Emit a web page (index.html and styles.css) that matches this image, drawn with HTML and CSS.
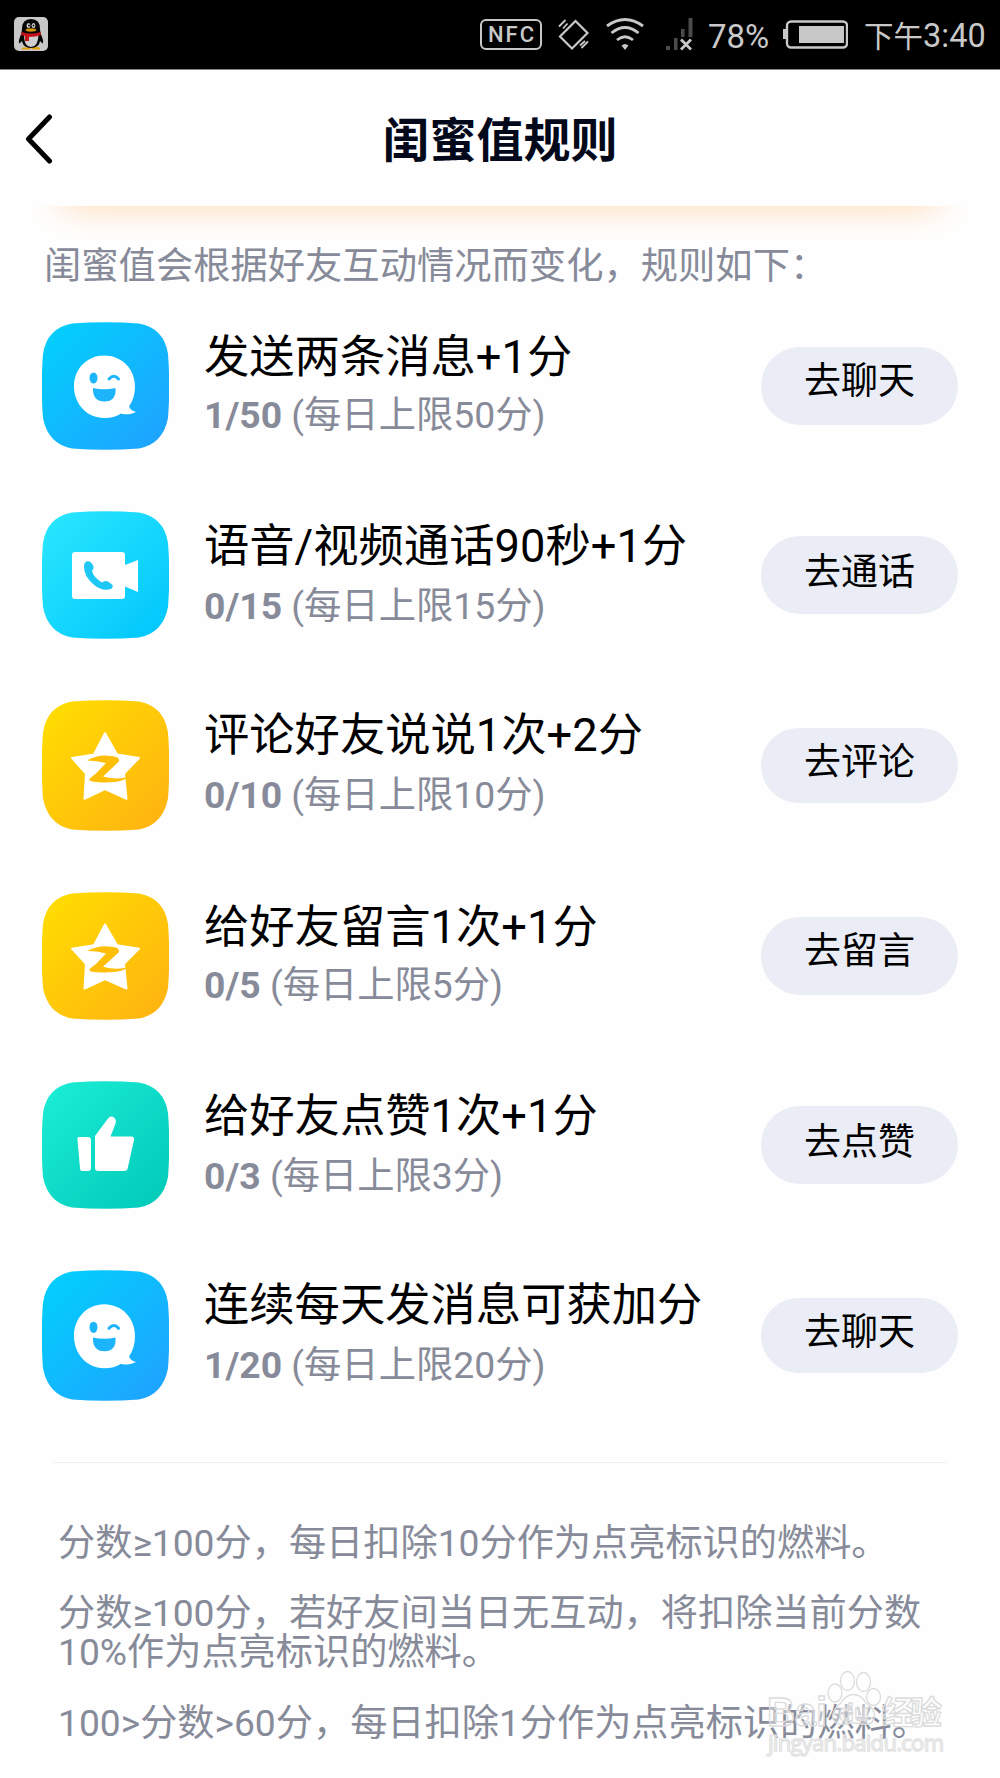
FILE: index.html
```html
<!DOCTYPE html>
<html lang="zh-CN">
<head>
<meta charset="utf-8">
<title>闺蜜值规则</title>
<link rel="stylesheet" href="styles.css">
</head>
<body>
<svg class="defs" width="0" height="0" aria-hidden="true">
  <defs>
    <linearGradient id="g-blue" x1="0" y1="0" x2="1" y2="1"><stop offset="0" stop-color="#00d2fc"/><stop offset="1" stop-color="#21a0ff"/></linearGradient>
    <linearGradient id="g-cyan" x1="0" y1="0" x2="1" y2="1"><stop offset="0" stop-color="#2be8fe"/><stop offset="1" stop-color="#00c5fc"/></linearGradient>
    <linearGradient id="g-gold" x1="0" y1="0" x2="1" y2="1"><stop offset="0" stop-color="#ffdf00"/><stop offset="1" stop-color="#ffb112"/></linearGradient>
    <linearGradient id="g-green" x1="0" y1="0" x2="1" y2="1"><stop offset="0" stop-color="#1ceed6"/><stop offset="1" stop-color="#00c8b8"/></linearGradient>
    <path id="tile-shape" d="M30 1.500Q63.500-1 97 1.500Q122 6 126 32Q128.500 64 126 96Q121 122 97 126.500Q63.500 129 30 126.500Q6 122 1 96Q-1.500 64 1 32Q5 6 30 1.500Z"/>
    <symbol id="chat" viewBox="0 0 127 128" preserveAspectRatio="none">
      <use href="#tile-shape" fill="url(#g-blue)"/>
      <path fill="#fff" d="M62 33.500C45 33.500 32 47 32 64.500S45 96 62 96C69 96 74.500 94.500 79 91.500C84 93 89 92.500 94 90Q88.500 88.500 87 84.500C91 79 93 72 93 64.500C93 47 80 33.500 62 33.500Z"/>
      <ellipse cx="51.500" cy="56" rx="4" ry="5.500" fill="#1cb5fb"/>
      <path d="M67 57Q72 51.500 76.500 57" fill="none" stroke="#1cb5fb" stroke-width="3" stroke-linecap="round"/>
      <path fill="#1cb5fb" d="M51 66Q62 68.500 73.500 66Q74.500 79.500 62.500 79.500T51 66Z"/>
    </symbol>
    <symbol id="video" viewBox="0 0 127 128" preserveAspectRatio="none">
      <use href="#tile-shape" fill="url(#g-cyan)"/>
      <path fill="#fff" d="M33 41H80Q83 41 83 44V54L96 49V81L83 75.500V85Q83 88 80 88H33Q30 88 30 85V44Q30 41 33 41Z"/>
      <path fill="#1dc8f6" d="M44 50.500Q48 49 50.500 53.500Q53 57 50 59.500Q51 66 60 71.500Q62.500 69 66 70.500L70 73.500Q72 75.500 69 78Q60 81 51 73Q42 65 42 56Q42 52 44 50.500Z"/>
    </symbol>
    <symbol id="star" viewBox="0 0 127 130" preserveAspectRatio="none">
      <use href="#tile-shape" transform="scale(1 1.0156)" fill="url(#g-gold)"/>
      <path fill="#fff" stroke="#fff" stroke-width="2" stroke-linejoin="round" d="M63 33L75 54L97 57.500L82 73L84.500 98L63 88.500L42.500 98L44 73L30 57.500L52 54Z"/>
      <path fill="#ffbf08" d="M45 60Q56 54 69 55.500Q78 56 77 61L61 76Q75 80 87 76Q80 82 67 81.500Q50 82.500 47 79.500Q48 77 54 73L64 62.500Q55 60 45 60Z"/>
    </symbol>
    <symbol id="thumb" viewBox="0 0 127 128" preserveAspectRatio="none">
      <use href="#tile-shape" fill="url(#g-green)"/>
      <path fill="#fff" d="M37 56H46Q49 56 49 59V87Q49 90 46 90H40Q38 90 38 87L35.500 59Q35 56 37 56ZM53 55L66 37.500Q69 34 72.500 37Q75 39.500 73 44L68.500 55.500H90Q92.500 56 92 59L85.500 88Q85 90 82 90H56Q53 90 53 87Z"/>
    </symbol>
  </defs>
</svg>

<header class="status">
  <svg class="qq" viewBox="0 0 34 34">
    <rect width="34" height="34" rx="5" fill="#c8c8c8"/>
    <path d="M10 30.500Q7 30 8 32.500H16L17 30.500L18.500 32.500H25.500Q27 30 23 30Z" fill="#e5a00a"/>
    <path fill="#050505" d="M17 2Q8 2 8 12Q8 16 6 20Q4 25 5.500 26.500L8 24Q9 31 17 31T26 24L28.500 26.500Q30 25 28 20Q26 16 26 12Q26 2 17 2Z"/>
    <path fill="#cecece" d="M10 18Q10 30 17 30T24.500 18Z"/>
    <ellipse cx="14.500" cy="8.500" rx="1.900" ry="2.600" fill="#d0d0d0"/><ellipse cx="19.500" cy="8.500" rx="1.900" ry="2.600" fill="#d0d0d0"/>
    <circle cx="15" cy="8.500" r=".9"/><circle cx="19.500" cy="8.500" r=".9"/>
    <ellipse cx="17" cy="13" rx="5.300" ry="1.700" fill="#d4910a"/>
    <path fill="#c31318" d="M7.500 15Q17 18 26.500 15L27 18Q22 20 15 20V24H11V19L7 18Z"/>
  </svg>
  <div class="indicators">
    <span class="nfc">NFC</span>
    <svg class="vibrate" viewBox="0 0 32 32" fill="none" stroke="#c8c8c8"><path stroke-width="2.200" d="M17.500 2L29.500 14L14 29.500L2 17.500Z"/><path stroke-width="1.800" d="M1 7.500L7.500 1M5 9.500L9.500 4.500M23.500 29L30 22.500M22 26.500L27 22"/></svg>
    <svg class="wifi" viewBox="0 0 38 32" fill="none" stroke="#c8c8c8" stroke-width="2.800"><path d="M1 8Q19-5 37 8M5.500 15Q19 4 32.500 15M11 22Q19 15.500 27 22"/><path fill="#c8c8c8" stroke="none" d="M15.500 27.500Q19 24.500 22.500 27.500L19 32Z"/></svg>
    <svg class="signal" viewBox="0 0 27 33"><path fill="#4b4b4b" d="M0 28H4V32H0ZM8 20H11.500V32H8ZM15 11H18.500V19H15ZM22.500 0H26.500V19H22.500Z"/><path stroke="#c8c8c8" stroke-width="2.800" d="M15 21.500L25 31.500M25 21.500L15 31.500"/></svg>
    <span class="percent">78%</span>
    <svg class="battery" viewBox="0 0 65 29"><rect x="4" y="1.500" width="60" height="26" rx="4" fill="none" stroke="#c8c8c8" stroke-width="2.400"/><path fill="#c8c8c8" d="M0 9H4V19H0ZM16 6H61V23H16Z"/></svg>
    <span class="clock"><span class="period">下午</span>3:40</span>
  </div>
</header>

<nav class="titlebar">
  <svg class="back" viewBox="0 0 28 50"><path d="M24.500 3L3.500 25L24.500 47" fill="none" stroke="#000" stroke-width="5" stroke-linecap="round" stroke-linejoin="round"/></svg>
  <h1>闺蜜值规则</h1>
</nav>

<main>
  <div class="glow"></div>
  <p class="intro">闺蜜值会根据好友互动情况而变化，规则如下：</p>

  <ul class="rules">
    <li class="rule">
      <svg class="icon"><use href="#chat"/></svg>
      <div class="text"><h2>发送两条消息+1分</h2><p><b>1/50</b> (每日上限50分)</p></div>
      <button class="go">去聊天</button>
    </li>
    <li class="rule loose">
      <svg class="icon"><use href="#video"/></svg>
      <div class="text"><h2>语音/视频通话90秒+1分</h2><p><b>0/15</b> (每日上限15分)</p></div>
      <button class="go">去通话</button>
    </li>
    <li class="rule loose tall">
      <svg class="icon"><use href="#star"/></svg>
      <div class="text"><h2>评论好友说说1次+2分</h2><p><b>0/10</b> (每日上限10分)</p></div>
      <button class="go">去评论</button>
    </li>
    <li class="rule">
      <svg class="icon"><use href="#star"/></svg>
      <div class="text"><h2>给好友留言1次+1分</h2><p><b>0/5</b> (每日上限5分)</p></div>
      <button class="go">去留言</button>
    </li>
    <li class="rule loose">
      <svg class="icon"><use href="#thumb"/></svg>
      <div class="text"><h2>给好友点赞1次+1分</h2><p><b>0/3</b> (每日上限3分)</p></div>
      <button class="go">去点赞</button>
    </li>
    <li class="rule loose tall">
      <svg class="icon"><use href="#chat"/></svg>
      <div class="text"><h2>连续每天发消息可获加分</h2><p><b>1/20</b> (每日上限20分)</p></div>
      <button class="go">去聊天</button>
    </li>
  </ul>

  <section class="notes">
    <p>分数≥100分，每日扣除10分作为点亮标识的燃料。</p>
    <p>分数≥100分，若好友间当日无互动，将扣除当前分数<br>10%作为点亮标识的燃料。</p>
    <p>100&gt;分数&gt;60分，每日扣除1分作为点亮标识的燃料。</p>
  </section>
</main>

<svg class="watermark" viewBox="0 0 190 100">
  <g fill="#fff" fill-opacity=".4" stroke="#dcdcdc" stroke-width="1.300">
    <ellipse cx="70" cy="28" rx="7" ry="9"/>
    <ellipse cx="82.500" cy="16" rx="7" ry="9.500"/>
    <ellipse cx="98.500" cy="17" rx="7" ry="9.500"/>
    <ellipse cx="108.500" cy="32" rx="7" ry="8.500"/>
    <path d="M88.500 29.500Q96 29.500 101 38Q112 46 109 54Q106 61 96 59Q88 57 81 59Q71 61 68 54Q66 45 76 38Q81 29.500 88.500 29.500Z"/>
    <text x="2" y="61" class="wm-brand" textLength="60" lengthAdjust="spacingAndGlyphs">Bai</text>
    <text x="74" y="56" class="wm-du" textLength="30">du</text>
    <text x="117" y="59" class="wm-cn" textLength="60">经验</text>
    <text x="3" y="86" class="wm-url" textLength="176">jingyan.baidu.com</text>
  </g>
</svg>
</body>
</html>
```
FILE: styles.css
```css
* { box-sizing: border-box; margin: 0; padding: 0; }

body {
  position: relative;
  width: 1000px;
  height: 1778px;
  overflow: hidden;
  background: #fefefe;
  color: #000;
  font-family: Roboto, "Noto Sans CJK SC", sans-serif;
  font-size: 37.3px;
}

.defs { position: absolute; }

.status {
  display: flex;
  align-items: flex-start;
  justify-content: space-between;
  height: 70px;
  padding: 0 15px 0 14px;
  border-bottom: 1px solid #858585;
  background: #000;
  color: #c8c8c8;
}
.qq { width: 34px; height: 34px; margin-top: 17px; }
.indicators { display: flex; align-items: flex-start; }
.nfc {
  width: 62px;
  height: 31px;
  margin-top: 19px;
  padding-left: 2px;
  border: 2px solid #c8c8c8;
  border-radius: 6px;
  font-size: 22px;
  font-weight: 500;
  line-height: 28px;
  letter-spacing: 2px;
  text-align: center;
}
.vibrate { width: 32px; height: 32px; margin: 19px 0 0 16px; }
.wifi { width: 38px; height: 32px; margin: 18px 0 0 16px; }
.signal { width: 27px; height: 33px; margin: 18px 0 0 22px; }
.percent { width: 60px; margin-left: 15px; font-size: 33px; line-height: 73px; white-space: nowrap; }
.battery { width: 65px; height: 29px; margin: 20px 0 0 15px; }
.clock { width: 121px; margin-left: 16px; font-size: 32.5px; line-height: 73px; white-space: nowrap; }
.period { font-size: 29.5px; }

.titlebar {
  display: grid;
  grid-template-columns: 100px 1fr 100px;
  align-items: center;
  height: 136px;
}
.back { width: 28px; height: 50px; margin: 2px 0 0 25px; }
.titlebar h1 {
  padding-top: 5px;
  color: #03081a;
  font-size: 47px;
  font-weight: 700;
  line-height: 60px;
  text-align: center;
}

/* Only the lower shadow of the card above is visible here. */
.glow { height: 34px; overflow: hidden; }
.glow::before {
  content: "";
  display: block;
  height: 60px;
  margin: -60px 56px 0;
  border-radius: 24px;
  box-shadow: 0 3px 36px #ffdcb8;
}
.intro { height: 82px; padding: 1px 0 0 44px; color: #878b99; line-height: 50px; }

.rules { list-style: none; }
.rule {
  display: grid;
  grid-template-columns: 162px 557px 197px;
  align-items: start;
  height: 189px;
  padding-left: 42px;
}
.rule.tall { height: 192px; }
.icon { display: block; width: 127px; height: 128px; }
.tall .icon { height: 131px; }
.text h2 { padding-top: 7px; font-size: 45.3px; font-weight: 400; line-height: 58px; white-space: nowrap; }
.text p { padding-top: 5px; color: #878b99; line-height: 46px; white-space: nowrap; }
.loose .text p { padding-top: 7px; }
.text b { font-weight: 700; }
.go {
  height: 78px;
  margin-top: 25px;
  padding-bottom: 8px;
  border: 0;
  border-radius: 39px;
  background: #eaedf5;
  color: #000;
  font: inherit;
  font-size: 37px;
  line-height: 60px;
}
.loose .go { padding-bottom: 4px; }
.tall .go { height: 75px; margin-top: 28px; padding-bottom: 6px; }

.notes {
  margin: 0 53px;
  padding: 61px 0 0 5px;
  border-top: 1px solid #eeeff5;
  color: #878b99;
  font-size: 37.2px;
  line-height: 39px;
  white-space: nowrap;
}
.notes p { margin-bottom: 31px; }
.notes p:last-child { padding-top: 1px; }

.watermark { position: absolute; left: 765px; top: 1665px; width: 190px; height: 100px; }
.wm-brand { font: 700 40px "Liberation Sans", sans-serif; }
.wm-du { font: 700 24px "Liberation Sans", sans-serif; }
.wm-cn { font: 700 32px "Noto Sans CJK SC", sans-serif; }
.wm-url { font: 400 22px "Open Sans", sans-serif; stroke: #e2e2e2; }
```
